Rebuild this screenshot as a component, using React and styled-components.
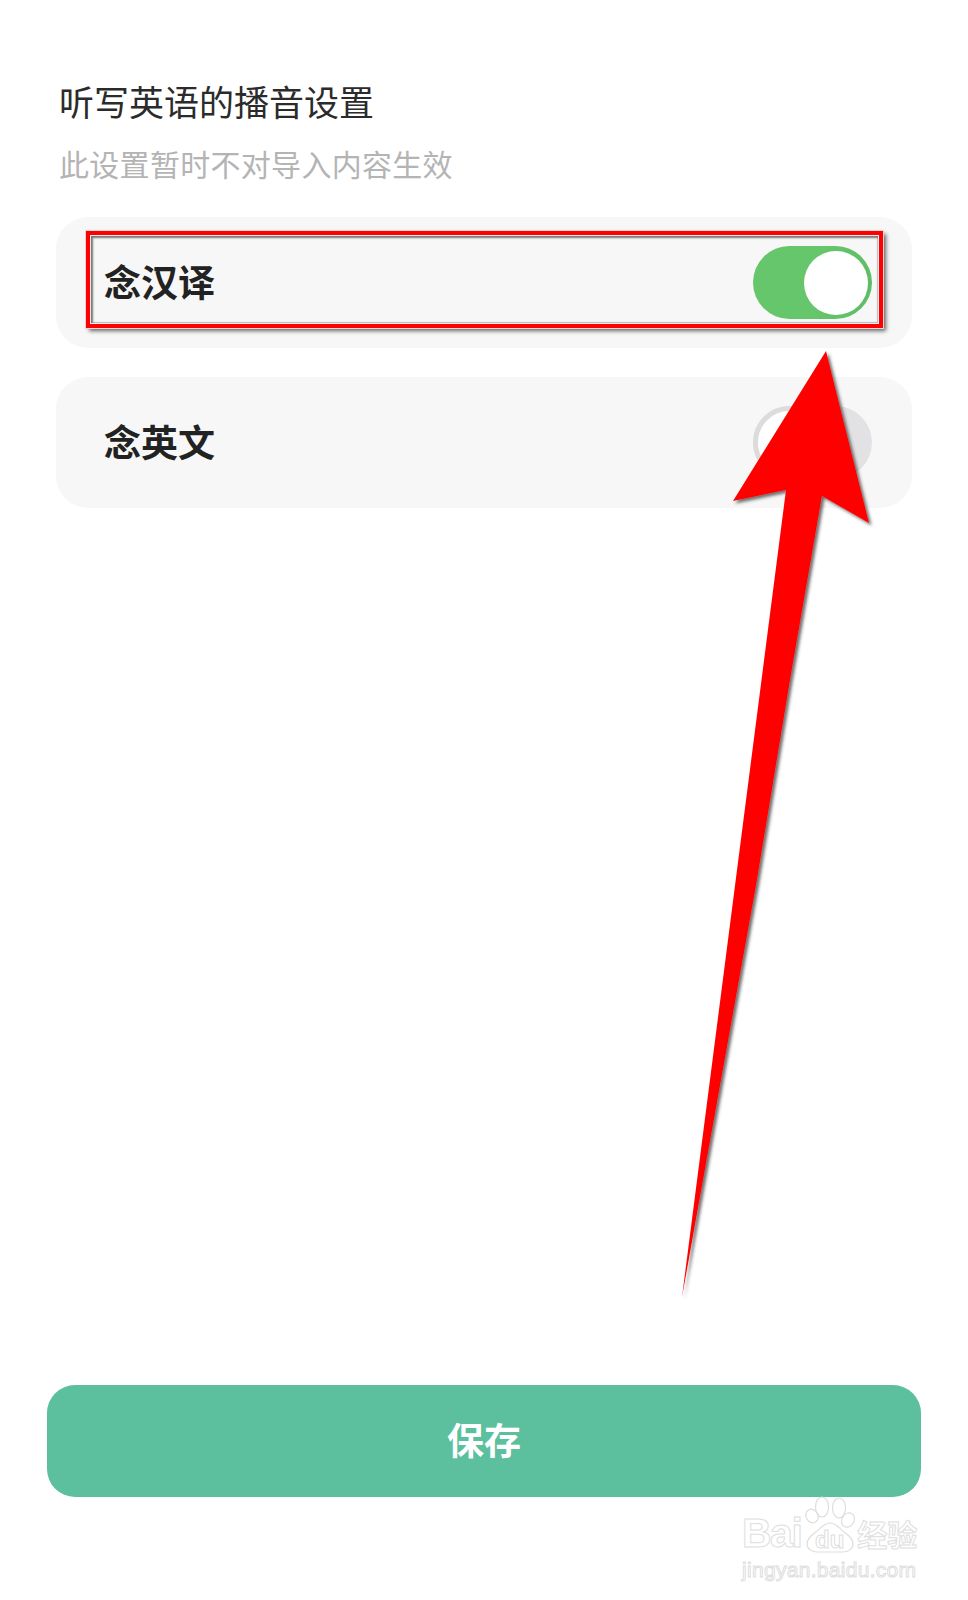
import React from 'react'
import styled, {createGlobalStyle} from "styled-components";

const GlobalStyle = createGlobalStyle`
  html, body {
    margin: 0;
    padding: 0;
    background: #fff;
  }
  body {
    font-family: "Liberation Sans", "Noto Sans CJK SC", sans-serif;
  }
`;

const Page = styled.div`
  position: relative;
  width: 968px;
  height: 1600px;
  overflow: hidden;
  box-sizing: border-box;
  padding: 84px 47px 103px;
  display: flex;
  flex-direction: column;
`;
const Heading = styled.h1`
  margin: 0 0 0 12px;
  font-size: 35px;
  line-height: 40px;
  font-weight: 400;
  color: #2b2b2b;
`;
const Hint = styled.p`
  margin: 25px 0 0 12px;
  font-size: 30px;
  line-height: 34px;
  letter-spacing: 0.3px;
  color: #b4b4b4;
`;
const Options = styled.div`
  display: flex;
  flex-direction: column;
  gap: 29px;
  margin: 34px 9px 0;
`;
const Option = styled.div`
  display: flex;
  align-items: center;
  justify-content: space-between;
  height: 131px;
  padding: 0 40px 0 48px;
  border-radius: 32px;
  background: #f7f7f7;
`;
const OptionLabel = styled.span`
  padding-bottom: 3px;
  font-size: 37px;
  font-weight: 700;
  color: #222;
`;
const Toggle = styled.div`
  display: flex;
  justify-content: ${p => p.$on ? 'flex-end' : 'flex-start'};
  align-items: center;
  box-sizing: border-box;
  width: 119px;
  height: 73px;
  padding: ${p => p.$on ? '0 4px 0 0' : '0'};
  border-radius: 37px;
  background: ${p => p.$on ? 'linear-gradient(100deg, #66c66b 55%, #5dbb66)' : '#e2e2e4'};
`;
const Knob = styled.div`
  box-sizing: border-box;
  width: ${p => p.$on ? '64px' : '73px'};
  height: ${p => p.$on ? '64px' : '73px'};
  border-radius: 50%;
  background: #fff;
  border: ${p => p.$on ? 'none' : '5px solid #dcdcdc'};
`;
const SaveButton = styled.button`
  margin-top: auto;
  height: 112px;
  padding: 0 0 4px;
  border: none;
  border-radius: 28px;
  background: #5cbf9e;
  color: #fff;
  font-family: inherit;
  font-size: 37px;
  font-weight: 700;
`;
const Highlight = styled.div`
  position: absolute;
  left: 86px;
  top: 231px;
  width: 797px;
  height: 97px;
  box-sizing: border-box;
  border: 4px solid #f00;
  outline: 1px solid #ecd4d4;
  box-shadow: 3px 3px 4px #666, inset 0 0 0 1px #eee, inset 3px 3px 2px #777, inset -2px -2px 1px #bbb;
`;
const ArrowOverlay = styled.svg`
  position: absolute;
  left: 0;
  top: 0;
  pointer-events: none;
`;
const Watermark = styled.div`
  position: absolute;
  left: 742px;
  top: 1496px;
  width: 176px;
  color: transparent;
  -webkit-text-stroke: 1px #dedede;
`;
const WatermarkBrand = styled.div`
  display: flex;
  align-items: flex-end;
  height: 58px;
`;
const WatermarkBai = styled.span`
  font-size: 41px;
  line-height: 42px;
  font-weight: 700;
  letter-spacing: -1.5px;
`;
const WatermarkCn = styled.span`
  margin-left: 2px;
  font-size: 30px;
  line-height: 36px;
  font-weight: 700;
`;
const WatermarkUrl = styled.div`
  margin-top: 4px;
  font-size: 21px;
  line-height: 24px;
  letter-spacing: 0.3px;
`;
const PawIcon = styled.svg`
  flex: none;
  margin-left: 4px;
`;
const PawText = styled.text`
  font-size: 24px;
  font-weight: 700;
  fill: none;
  stroke: #dedede;
  stroke-width: 1;
`;

const App = () => {
    return (
        <Page>
            <GlobalStyle/>
            <Heading>听写英语的播音设置</Heading>
            <Hint>此设置暂时不对导入内容生效</Hint>
            <Options>
                <Option>
                    <OptionLabel>念汉译</OptionLabel>
                    <Toggle $on><Knob $on/></Toggle>
                </Option>
                <Option>
                    <OptionLabel>念英文</OptionLabel>
                    <Toggle><Knob/></Toggle>
                </Option>
            </Options>
            <SaveButton>保存</SaveButton>
            <Highlight/>
            <ArrowOverlay width="968" height="1600" viewBox="0 0 968 1600">
                <defs>
                    <filter id="arrowShadow" x="-15%" y="-5%" width="130%" height="110%">
                        <feDropShadow dx="2.5" dy="2.5" stdDeviation="1.6" floodColor="#333" floodOpacity="0.7"/>
                    </filter>
                </defs>
                <polygon points="826,351 869,523 822,496 790,680 757,880 682,1297 786,490 733,501" fill="#f00" filter="url(#arrowShadow)"/>
            </ArrowOverlay>
            <Watermark>
                <WatermarkBrand>
                    <WatermarkBai>Bai</WatermarkBai>
                    <PawIcon width="50" height="58" viewBox="0 0 50 58" fill="none" stroke="#dedede" strokeWidth="1.2">
                        <ellipse cx="7" cy="20" rx="6" ry="7" transform="rotate(-30 7 20)"/>
                        <ellipse cx="17" cy="11" rx="6.5" ry="10"/>
                        <ellipse cx="34" cy="12" rx="6.5" ry="10"/>
                        <ellipse cx="43" cy="24" rx="6" ry="7.5" transform="rotate(30 43 24)"/>
                        <path d="M25 27c6 0 9 5 14 9 6 4 9 8 9 12 0 5-5 8-10 8H12C7 56 2 53 2 48c0-4 3-8 9-12 5-4 8-9 14-9z"/>
                        <PawText x="10" y="52">du</PawText>
                    </PawIcon>
                    <WatermarkCn>经验</WatermarkCn>
                </WatermarkBrand>
                <WatermarkUrl>jingyan.baidu.com</WatermarkUrl>
            </Watermark>
        </Page>
    );
}

export default App
